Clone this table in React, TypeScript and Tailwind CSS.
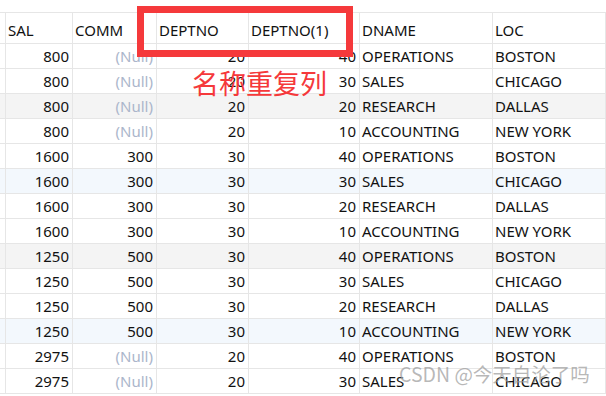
const depts: Record<number, [string, string]> = {
  40: ['OPERATIONS', 'BOSTON'],
  30: ['SALES', 'CHICAGO'],
  20: ['RESEARCH', 'DALLAS'],
  10: ['ACCOUNTING', 'NEW YORK'],
};

const rows: [number, number | null, number, number][] = [
  [800, null, 20, 40],
  [800, null, 20, 30],
  [800, null, 20, 20],
  [800, null, 20, 10],
  [1600, 300, 30, 40],
  [1600, 300, 30, 30],
  [1600, 300, 30, 20],
  [1600, 300, 30, 10],
  [1250, 500, 30, 40],
  [1250, 500, 30, 30],
  [1250, 500, 30, 20],
  [1250, 500, 30, 10],
  [2975, null, 20, 40],
  [2975, null, 20, 30],
];

const cols = 'grid grid-cols-[6px_67px_84px_92px_111px_133px_1fr]';
const cell = 'border-r border-[#e6e6e6] flex items-center overflow-hidden whitespace-nowrap';

function rowBg(i: number) {
  if (i === 2 || i === 8) return 'bg-[#f4f4f4]';
  if (i === 5 || i === 11) return 'bg-[#f3f8fd]';
  return 'bg-white';
}

export default function App() {
  return (
    <div className="relative w-[606px] h-[396px] overflow-hidden bg-white text-[15px] text-[#111] font-['Noto_Sans',sans-serif]">
      <div className="h-[13px] border-b border-[#e6e6e6]" />

      <div className={`${cols} h-[31px] border-b border-[#e6e6e6]`}>
        <div className={cell} />
        {['SAL', 'COMM', 'DEPTNO', 'DEPTNO(1)', 'DNAME', 'LOC'].map((h) => (
          <div key={h} className={`${cell} pl-[2px] pt-[4px]`}>
            {h}
          </div>
        ))}
      </div>

      {rows.map(([sal, comm, d1, d2], i) => (
        <div key={i} className={`${cols} h-[25px] border-b border-[#e6e6e6] ${rowBg(i)}`}>
          <div className={cell} />
          <div className={`${cell} justify-end pr-[3px]`}>{sal}</div>
          <div className={`${cell} justify-end pr-[3px]`}>
            {comm === null ? <span className="text-[#abb6cb]">(Null)</span> : comm}
          </div>
          <div className={`${cell} justify-end pr-[3px]`}>{d1}</div>
          <div className={`${cell} justify-end pr-[3px]`}>{d2}</div>
          <div className={`${cell} pl-[2px]`}>{depts[d2][0]}</div>
          <div className={`${cell} pl-[2px]`}>{depts[d2][1]}</div>
        </div>
      ))}

      {/* highlight annotation */}
      <div className="absolute left-[137px] top-[6px] w-[216px] h-[51px] border-[7px] border-[#f5393b]" />
      <div className="absolute left-[192px] top-[69px] text-[27px] leading-none text-[#f5393b] font-['Noto_Sans_CJK_SC',sans-serif]">
        名称重复列
      </div>

      {/* watermark */}
      <div className="absolute left-[399px] top-[364px] text-[19.5px] leading-none text-[#999]/70 font-['Noto_Sans_CJK_SC',sans-serif]">
        CSDN @今天自沦了吗
      </div>
    </div>
  );
}
